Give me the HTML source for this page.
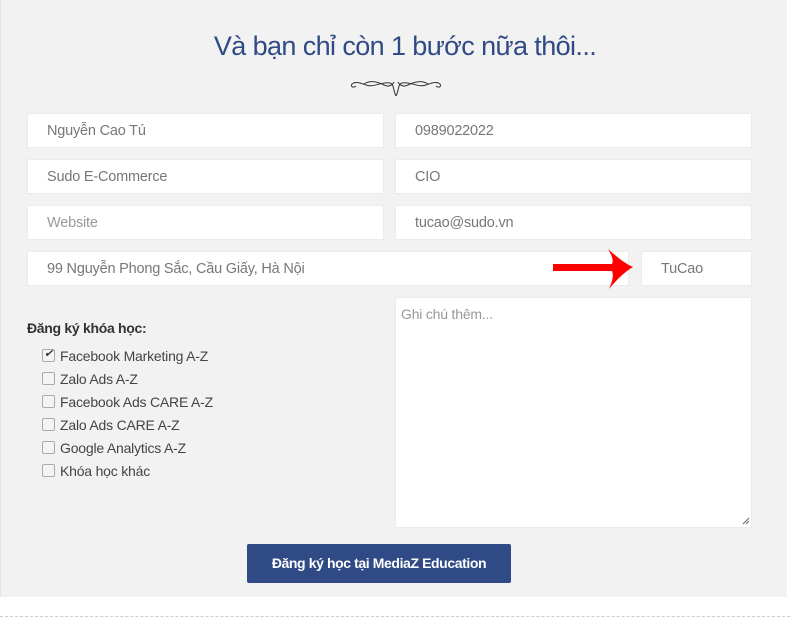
<!DOCTYPE html>
<html><head><meta charset="utf-8">
<style>
html,body{margin:0;padding:0;background:#fff;width:790px;height:621px;overflow:hidden;font-family:"Liberation Sans",sans-serif;}
.wrap{position:absolute;left:0;top:0;width:787px;height:597px;background:#f2f2f2;border-left:1px solid #e6e6e6;box-sizing:border-box;}
h1{position:absolute;left:0;width:810px;top:31px;margin:0;text-align:center;font-weight:normal;font-size:27px;color:#2f4a85;letter-spacing:-0.6px;}
.in{position:absolute;background:#fff;border:1px solid #ebebeb;box-sizing:border-box;height:35px;padding-left:19px;line-height:35px;font-size:14.5px;color:#777;letter-spacing:-0.2px;}
.lbl{position:absolute;left:27px;top:320px;font-weight:bold;font-size:14px;color:#333;letter-spacing:-0.3px;}
.cb{position:absolute;left:42px;font-size:14px;color:#444;letter-spacing:-0.2px;}
.cb i{display:inline-block;width:11px;height:11px;border:1px solid #aaa;border-radius:2px;background:#f4f4f4;vertical-align:-1px;margin-right:5px;position:relative;}
.btn{position:absolute;left:247px;top:544px;width:264px;height:39px;background:#2f4a85;border-radius:2px;color:#fff;font-weight:bold;font-size:14px;text-align:center;line-height:39px;letter-spacing:-0.4px;}
.dash{position:absolute;left:0;top:616px;width:790px;border-top:1px dashed #ccc;}
</style></head><body>
<div class="wrap"></div>
<h1>Và bạn chỉ còn 1 bước nữa thôi...</h1>
<svg style="position:absolute;left:350px;top:76px" width="92" height="22" viewBox="0 0 92 22" fill="none" stroke="#333" stroke-width="1">
<path d="M46 20 C43 14 44 8 40 7 C32 5 24 12 16 9 C10 7 5 5 2 8 C0 11 4 12 6 10"/>
<path d="M14 8 C20 4 28 6 34 9 C38 11 42 10 44 6"/>
<path d="M46 20 C49 14 48 8 52 7 C60 5 68 12 76 9 C82 7 87 5 90 8 C92 11 88 12 86 10"/>
<path d="M78 8 C72 4 64 6 58 9 C54 11 50 10 48 6"/>
</svg>
<div class="in" style="left:27px;top:113px;width:357px">Nguyễn Cao Tú</div>
<div class="in" style="left:395px;top:113px;width:357px">0989022022</div>
<div class="in" style="left:27px;top:159px;width:357px">Sudo E-Commerce</div>
<div class="in" style="left:395px;top:159px;width:357px">CIO</div>
<div class="in" style="left:27px;top:205px;width:357px;color:#999">Website</div>
<div class="in" style="left:395px;top:205px;width:357px">tucao@sudo.vn</div>
<div class="in" style="left:27px;top:251px;width:602px">99 Nguyễn Phong Sắc, Cầu Giấy, Hà Nội</div>
<div class="in" style="left:641px;top:251px;width:111px">TuCao</div>
<svg style="position:absolute;left:552px;top:248px" width="82" height="42" viewBox="0 0 82 42"><path d="M1 16 H60 C62 12 59 6 56 1 C66 10 74 16 81 19 C74 23 66 30 57 41 C60 34 62 28 60 23 H1 Z" fill="#f00"/></svg>
<div class="in" style="left:395px;top:297px;width:357px;height:231px;line-height:normal;padding:8px 5px;font-size:14px;color:#999">Ghi chú thêm...</div>
<svg style="position:absolute;left:742px;top:517px" width="8" height="8"><path d="M1 7 L7 1 M4 7 L7 4" stroke="#666" stroke-width="1"/></svg>
<div class="lbl">Đăng ký khóa học:</div>
<div class="cb" style="top:348px"><i><span style="position:absolute;left:1px;top:-3px;font-size:11px;color:#333">✔</span></i>Facebook Marketing A-Z</div>
<div class="cb" style="top:371px"><i></i>Zalo Ads A-Z</div>
<div class="cb" style="top:394px"><i></i>Facebook Ads CARE A-Z</div>
<div class="cb" style="top:417px"><i></i>Zalo Ads CARE A-Z</div>
<div class="cb" style="top:440px"><i></i>Google Analytics A-Z</div>
<div class="cb" style="top:463px"><i></i>Khóa học khác</div>
<div class="btn">Đăng ký học tại MediaZ Education</div>
<div class="dash"></div>
</body></html>
